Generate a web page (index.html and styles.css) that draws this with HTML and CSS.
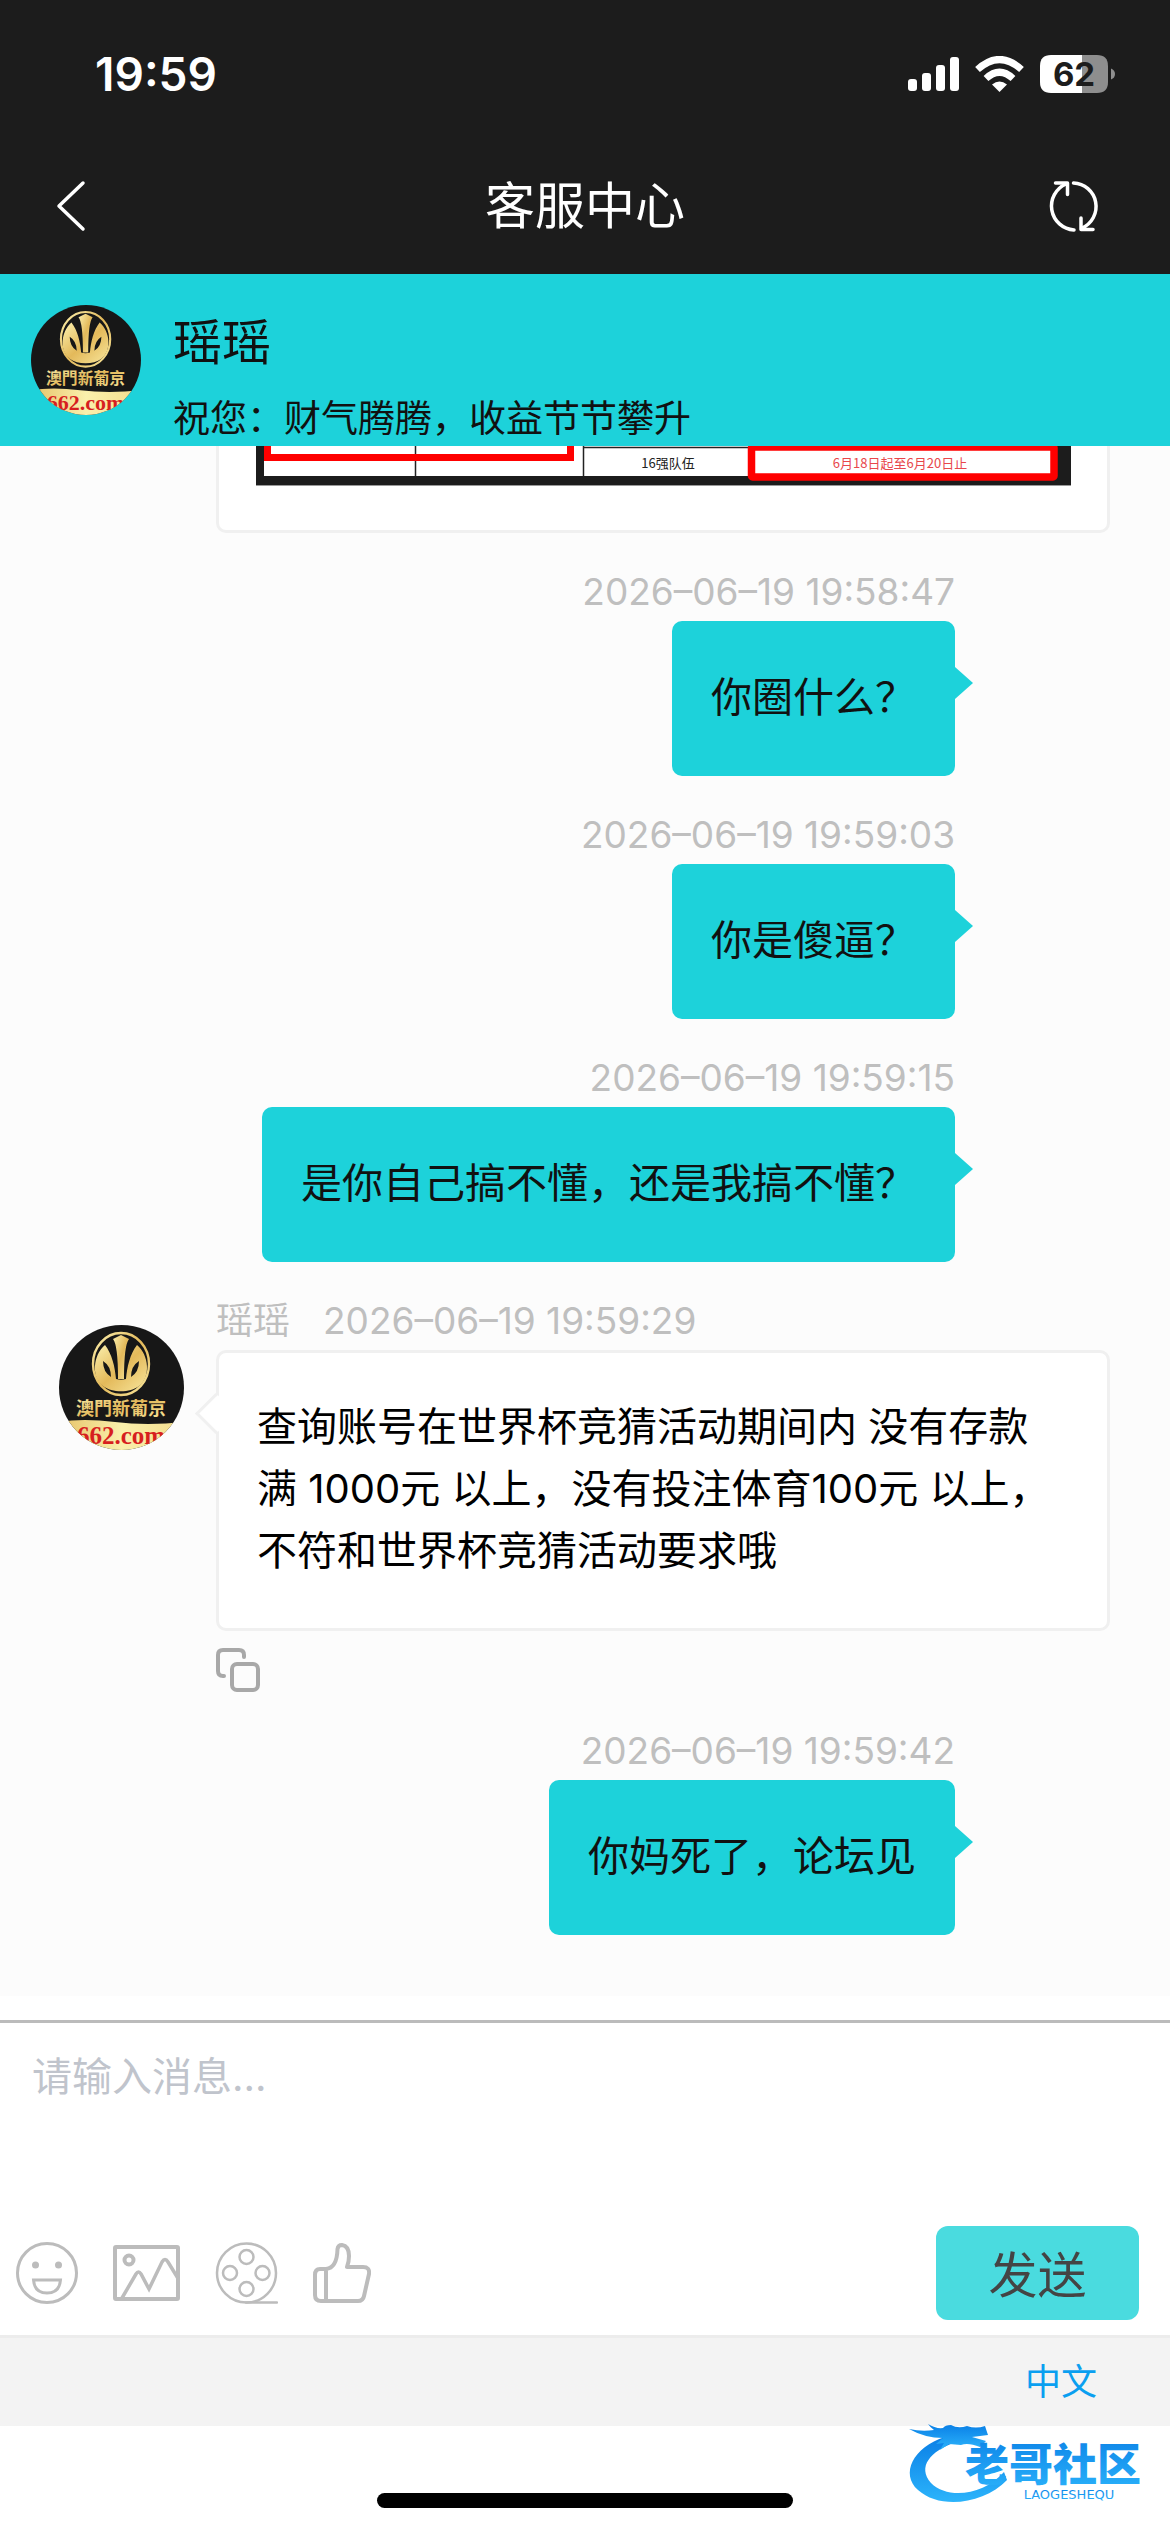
FILE: index.html
```html
<!DOCTYPE html>
<html lang="zh-CN">
<head>
<meta charset="utf-8">
<meta name="viewport" content="width=device-width, initial-scale=1">
<title>客服中心</title>
<link rel="stylesheet" href="styles.css">
</head>
<body>
<svg class="defs" aria-hidden="true">
  <defs>
    <linearGradient id="gold" x1="0" y1="0" x2="1" y2="1">
      <stop offset="0" stop-color="#fbf0ae"/><stop offset="0.5" stop-color="#e3b95a"/><stop offset="1" stop-color="#f8e69c"/>
    </linearGradient>
    <linearGradient id="band" x1="0" y1="0" x2="1" y2="0">
      <stop offset="0" stop-color="#e6c268"/><stop offset="0.5" stop-color="#faf0ac"/><stop offset="1" stop-color="#f3dc8c"/>
    </linearGradient>
    <linearGradient id="blue" x1="0" y1="0" x2="0" y2="1">
      <stop offset="0" stop-color="#0a7fe6"/><stop offset="1" stop-color="#2cb4fb"/>
    </linearGradient>
    <clipPath id="disc"><circle cx="62.5" cy="62.5" r="62.5"/></clipPath>
    <symbol id="avatar" viewBox="0 0 125 125">
      <g clip-path="url(#disc)">
        <rect width="125" height="125" fill="#171717"/>
        <ellipse cx="62" cy="39" rx="28" ry="31" fill="none" stroke="url(#gold)" stroke-width="2.4"/>
        <path d="M46 20C34 30 32 52 44 61C53 68 71 68 80 61C92 52 90 30 78 20C71 29 68 42 67 54C64 55 60 55 57 54C56 42 53 29 46 20Z" fill="url(#gold)"/>
        <path d="M62 10L70 14Q65 20 65 54H59Q59 20 54 14Z" fill="url(#gold)"/>
        <path d="M44 36Q52 41 52 52Q44 47 44 36ZM80 36Q72 41 72 52Q80 47 80 36Z" fill="#171717"/>
        <text class="avatar-name" x="62" y="90" fill="url(#gold)">澳門新葡京</text>
        <path d="M0 97Q24 93 56 97T125 97V125H0Z" fill="url(#band)"/>
        <text class="avatar-site" x="62" y="119">662.com</text>
      </g>
    </symbol>
  </defs>
</svg>

<header class="top">
  <div class="status">
    <span class="clock">19:59</span>
    <div class="status-icons">
      <svg width="51" height="34" viewBox="0 0 51 34" fill="#fff"><rect y="22" width="9" height="12" rx="3"/><rect x="14" y="16" width="9" height="18" rx="3"/><rect x="28" y="8" width="9" height="26" rx="3"/><rect x="42" width="9" height="34" rx="3"/></svg>
      <svg width="49" height="36" viewBox="0 0 49 36" fill="none" stroke="#fff" stroke-width="7"><path d="M2.500 13.500Q24.500 -6.500 46.500 13.500"/><path d="M11 22.500Q24.500 10 38 22.500"/><path d="M24.500 36L17 28.500Q24.500 22.500 32 28.500Z" fill="#fff" stroke="none"/></svg>
      <svg class="battery-icon" width="76" height="38" viewBox="0 0 76 38"><path d="M11 0H42V38H11Q0 38 0 27V11Q0 0 11 0Z" fill="#fff"/><path d="M42 0H57Q68 0 68 11V27Q68 38 57 38H42Z" fill="#8e8e8e"/><path d="M71 13.500Q75 15 75 19T71 24.500Z" fill="#8e8e8e"/><text class="battery" x="34" y="31">62</text></svg>
    </div>
  </div>
  <nav class="nav">
    <button class="plain" type="button" aria-label="返回"><svg width="30" height="52" viewBox="0 0 30 52" fill="none" stroke="#fff" stroke-width="3.500" stroke-linecap="round" stroke-linejoin="round"><path d="M27 3L3 26L27 49"/></svg></button>
    <h1>客服中心</h1>
    <button class="plain" type="button" aria-label="刷新"><svg width="52" height="52" viewBox="0 0 52 52" fill="none" stroke="#fff" stroke-width="3.500" stroke-linecap="round" stroke-linejoin="round"><path d="M26 50A24 24 0 0 1 18 4"/><path d="M7.500 3H19.500V14.500"/><path d="M25.500 3A23.500 23.500 0 0 1 34 48"/><path d="M45 49.500H33V38"/></svg></button>
  </nav>
</header>

<section class="agent">
  <svg class="agent-avatar" role="img" aria-label="瑶瑶"><use href="#avatar"/></svg>
  <div>
    <h2>瑶瑶</h2>
    <p>祝您：财气腾腾，收益节节攀升</p>
  </div>
</section>

<main class="chat">
  <article class="shot">
    <svg viewBox="0 0 815 40" role="img" aria-label="活动表格">
      <rect width="815" height="40" fill="#1c1c1c"/>
      <path d="M8 0H799V30H8Z" fill="#fff"/>
      <path d="M159.500 0V30M327.500 0V30M327 1.500H492" stroke="#222" stroke-width="1.500"/>
      <path d="M11.500 0V11.500H314.500V0" fill="none" stroke="#f00" stroke-width="7"/>
      <rect x="495.500" y="1" width="302.500" height="30" rx="1" fill="none" stroke="#f00" stroke-width="7.500"/>
      <path d="M0 39.500H815" stroke="#999"/>
      <text class="cell" x="412" y="22">16强队伍</text>
      <text class="cell cell-red" x="644" y="22">6月18日起至6月20日止</text>
    </svg>
  </article>

  <article class="msg mine">
    <div class="meta"><time>2026–06–19 19:58:47</time></div>
    <p class="bubble">你圈什么？</p>
  </article>
  <article class="msg mine">
    <div class="meta"><time>2026–06–19 19:59:03</time></div>
    <p class="bubble">你是傻逼？</p>
  </article>
  <article class="msg mine">
    <div class="meta"><time>2026–06–19 19:59:15</time></div>
    <p class="bubble">是你自己搞不懂，还是我搞不懂？</p>
  </article>

  <article class="msg theirs">
    <svg class="msg-avatar" role="img" aria-label="瑶瑶"><use href="#avatar"/></svg>
    <div class="body">
      <div class="meta"><span>瑶瑶</span><time>2026–06–19 19:59:29</time></div>
      <p class="bubble">查询账号在世界杯竞猜活动期间内 没有存款<br>满 1000元 以上，没有投注体育100元 以上，<br>不符和世界杯竞猜活动要求哦</p>
      <button class="plain copy" type="button" aria-label="复制"><svg width="44" height="44" viewBox="0 0 44 44" fill="none" stroke="#a8a8a8" stroke-width="4" stroke-linecap="round"><rect x="16" y="16" width="26" height="26" rx="5"/><path d="M28 9V7Q28 2 23 2H7Q2 2 2 7V23Q2 28 7 28H8"/></svg></button>
    </div>
  </article>

  <article class="msg mine">
    <div class="meta"><time>2026–06–19 19:59:42</time></div>
    <p class="bubble">你妈死了，论坛见</p>
  </article>
</main>

<form class="composer">
  <textarea aria-label="消息" placeholder="请输入消息..."></textarea>
  <div class="tools">
    <button class="plain" type="button" aria-label="表情"><svg width="62" height="62" viewBox="0 0 62 62" fill="none" stroke="#bcbcbc" stroke-width="3"><circle cx="31" cy="31" r="29.500"/><circle cx="19.500" cy="23" r="3.500" fill="#bcbcbc" stroke="none"/><circle cx="42.500" cy="23" r="3.500" fill="#bcbcbc" stroke="none"/><path d="M17.500 38H44.500Q43.500 51 31 51T17.500 38Z"/></svg></button>
    <button class="plain" type="button" aria-label="图片"><svg width="67" height="56" viewBox="0 0 67 56" fill="none" stroke="#bcbcbc" stroke-width="4"><rect x="2" y="2" width="63" height="52" rx="1"/><circle cx="16" cy="15" r="4.500"/><path d="M9 53L23 29Q25.500 25 28 29L36 44L49 17Q52 12 55 17L66 35" stroke-width="3.500"/></svg></button>
    <button class="plain" type="button" aria-label="视频"><svg width="63" height="62" viewBox="0 0 63 62" fill="none" stroke="#bcbcbc" stroke-width="2.500"><circle cx="31.500" cy="31" r="29.500"/><circle cx="31.500" cy="15" r="7"/><circle cx="31.500" cy="47" r="7"/><circle cx="15" cy="31" r="7"/><circle cx="47.500" cy="31" r="7"/><path d="M31 60.500H62" stroke-linecap="round"/></svg></button>
    <button class="plain" type="button" aria-label="点赞"><svg width="58" height="60" viewBox="0 0 58 60" fill="none" stroke="#bcbcbc" stroke-width="4" stroke-linejoin="round"><path d="M2 32Q2 26 7 26H13Q24 25 24.500 6Q25 2 29 2Q36 3 36 13Q36 19 34 24H50Q57 24 56 31L51 53Q50 58 45 58H8Q2 58 2 52ZM13 26V58"/></svg></button>
    <button class="send" type="submit">发送</button>
  </div>
</form>

<footer class="lang"><a href="#lang">中文</a></footer>
<div class="home"><span></span></div>

<aside class="mark" aria-label="老哥社区">
  <svg viewBox="0 0 244 88" fill="url(#blue)">
    <path d="M37 19C5 29 -8 56 10 72C32 92 76 86 99 62L96 54C76 77 40 82 23 65C9 49 22 33 48 24Z"/>
    <path d="M1 11Q14 14 26 12Q22 9 20 6Q28 11 35 10Q37 7 43 7Q50 11 59 8Q68 11 77 8L80 17L64 19L78 23L72 29Q60 24 53 27L41 26L32 32L36 25L28 26L35 20Q17 20 1 11Z"/>
    <text class="mark-name" x="145" y="63">老哥社区</text>
    <text class="mark-sub" x="161" y="81">LAOGESHEQU</text>
  </svg>
</aside>
</body>
</html>
```
FILE: styles.css
```css
* { box-sizing: border-box; }

body {
  margin: 0;
  min-height: 100vh;
  display: flex;
  flex-direction: column;
  position: relative;
  background: #fff;
  color: #111;
  font-family: Inter, "Noto Sans CJK SC", sans-serif;
  font-size: 40px;
}

h1, h2, p { margin: 0; font-weight: 400; }
svg { display: block; }
.defs { position: absolute; width: 0; height: 0; }

.plain {
  padding: 0;
  border: 0;
  background: none;
}

/* Status bar and title */
.top { background: #1c1c1c; color: #fff; }

.status {
  display: flex;
  justify-content: space-between;
  align-items: center;
  height: 148px;
  padding: 0 54px 0 95px;
}

.clock { font-size: 46px; font-weight: 600; }
.status-icons { display: flex; align-items: center; gap: 16px; }
.battery-icon { overflow: visible; }

.battery {
  font-size: 33px;
  font-weight: 700;
  text-anchor: middle;
  fill: #1c1c1c;
}

.nav {
  display: grid;
  grid-template-columns: 1fr auto 1fr;
  align-items: center;
  height: 126px;
  padding: 0 70px 10px 56px;
}

.nav .plain:first-child { justify-self: start; }
.nav .plain:last-child { justify-self: end; }
.nav h1 { margin-right: -14px; font-size: 50px; line-height: 72px; }

/* Agent banner */
.agent {
  display: flex;
  align-items: flex-start;
  gap: 32px;
  height: 172px;
  padding: 31px 31px 0;
  background: #1dd2da;
}

.agent-avatar { width: 110px; height: 110px; }
.agent h2 { font-size: 49px; line-height: 76px; }
.agent p { margin-top: 10px; font-size: 37px; line-height: 56px; }

.avatar-name {
  font-family: "Noto Sans CJK TC", sans-serif;
  font-size: 18px;
  font-weight: 700;
  text-anchor: middle;
}

.avatar-site {
  font-family: "Liberation Serif", serif;
  font-size: 25px;
  font-weight: 700;
  text-anchor: middle;
  fill: #d71f1f;
}

/* Conversation */
.chat {
  display: flex;
  flex-direction: column;
  gap: 32px;
  padding-bottom: 61px;
  background: #fcfcfc;
}

.shot {
  margin: 0 60px 0 216px;
  padding: 0 36px 44px 37px;
  border: 3px solid #f0f0f0;
  border-top: 0;
  border-radius: 0 0 10px 10px;
  background: #fff;
}

.cell {
  font-family: "Noto Sans CJK SC", sans-serif;
  font-size: 13px;
  text-anchor: middle;
  fill: #222;
}

.cell-red { fill: #e8474c; }

.meta {
  display: flex;
  gap: 33px;
  padding-bottom: 2px;
  color: #bfbfbf;
  font-size: 37px;
  line-height: 54px;
}

.bubble {
  position: relative;
  padding: 45px 39px 48px;
  border-radius: 10px;
  line-height: 62px;
}

.mine {
  display: flex;
  flex-direction: column;
  align-items: flex-end;
  margin: 0 215px 0 60px;
}

.mine .bubble { background: #1dd2da; font-size: 41px; }

.mine .bubble::after {
  content: "";
  position: absolute;
  left: 100%;
  top: 46px;
  border: 16px solid transparent;
  border-left: 18px solid #1dd2da;
  border-right: 0;
}

.theirs {
  display: flex;
  gap: 32px;
  margin: 0 60px 0 59px;
}

.msg-avatar { flex: none; width: 125px; height: 125px; margin-top: 31px; }
.body { flex: 1; }

.theirs .bubble {
  padding: 43px 0 46px 38px;
  border: 3px solid #f0f0f0;
  background: #fff;
  color: #000;
}

.theirs .bubble::before {
  content: "";
  position: absolute;
  left: -18px;
  top: 46px;
  width: 26px;
  height: 26px;
  border: solid #f0f0f0;
  border-width: 0 0 3px 3px;
  background: linear-gradient(45deg, #fff 70%, transparent 70%);
  transform: rotate(45deg);
}

.copy { display: block; margin-top: 17px; }

/* Composer */
.composer {
  margin-top: 24px;
  border-top: 3px solid #bbb;
}

.composer textarea {
  display: block;
  width: 100%;
  height: 203px;
  padding: 24px 32px;
  border: 0;
  outline: 0;
  resize: none;
  background: none;
  font: inherit;
  line-height: 60px;
}

.composer textarea::placeholder { color: #c0c4cc; }

.tools {
  display: flex;
  align-items: center;
  gap: 35px;
  padding: 0 31px 15px 16px;
}

.send {
  width: 203px;
  height: 94px;
  margin-left: auto;
  padding: 0 0 4px;
  border: 0;
  border-radius: 12px;
  background: #4adbdf;
  color: #444;
  font: inherit;
  font-size: 49px;
}

.lang {
  padding: 16px 73px 16px 0;
  border-top: 3px solid #ececec;
  background: #f3f3f3;
  text-align: right;
  font-size: 36px;
  line-height: 56px;
}

.lang a { color: #0a9ff0; text-decoration: none; }

.home {
  flex: 1;
  display: flex;
  justify-content: center;
  align-items: flex-end;
  min-height: 106px;
  padding-bottom: 24px;
}

.home span {
  width: 416px;
  height: 15px;
  border-radius: 8px;
  background: #000;
}

.mark {
  position: absolute;
  right: 18px;
  bottom: 26px;
  width: 244px;
}

.mark svg { overflow: visible; }

.mark-name {
  font-family: "Noto Sans CJK SC", sans-serif;
  font-size: 44px;
  font-weight: 900;
  text-anchor: middle;
}

.mark-sub {
  font-family: "DejaVu Sans", sans-serif;
  font-size: 13px;
  text-anchor: middle;
}
```
